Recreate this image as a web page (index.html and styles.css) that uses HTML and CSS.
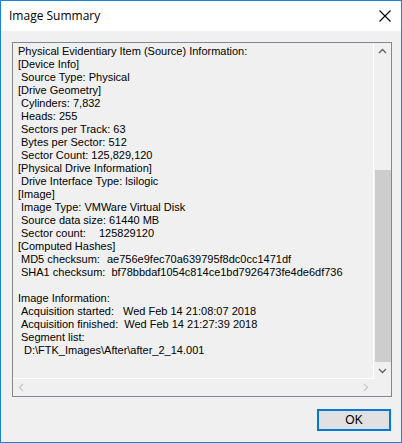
FILE: index.html
```html
<!DOCTYPE html>
<html>
<head>
<meta charset="utf-8">
<link rel="stylesheet" href="styles.css">
</head>
<body>
<div class="window">
  <div class="titlebar">
    <span class="title">Image Summary</span>
    <svg class="close" width="12" height="12" viewBox="0 0 12 12"><path d="M0.5 0.5 L11.5 11.5 M11.5 0.5 L0.5 11.5" stroke="#000" stroke-width="1.1" fill="none"/></svg>
  </div>
  <div class="client">
    <div class="box">
      <div class="content">
        <div class="text">
          <div class="ln">Physical Evidentiary Item (Source) Information:</div>
          <div class="ln">[Device Info]</div>
          <div class="ln in1">Source Type: Physical</div>
          <div class="ln">[Drive Geometry]</div>
          <div class="ln in1">Cylinders: 7,832</div>
          <div class="ln in1">Heads: 255</div>
          <div class="ln in1">Sectors per Track: 63</div>
          <div class="ln in1">Bytes per Sector: 512</div>
          <div class="ln in1">Sector Count: 125,829,120</div>
          <div class="ln">[Physical Drive Information]</div>
          <div class="ln in1">Drive Interface Type: lsilogic</div>
          <div class="ln">[Image]</div>
          <div class="ln in1">Image Type: VMWare Virtual Disk</div>
          <div class="ln in1">Source data size: 61440 MB</div>
          <div class="ln in1 kv"><span class="lbl w81">Sector count:</span><span>125829120</span></div>
          <div class="ln">[Computed Hashes]</div>
          <div class="ln in1 kv"><span class="lbl w89">MD5 checksum:</span><span>ae756e9fec70a639795f8dc0cc1471df</span></div>
          <div class="ln in1 kv"><span class="lbl w91">SHA1 checksum:</span><span>bf78bbdaf1054c814ce1bd7926473fe4de6df736</span></div>
          <div class="ln blank"></div>
          <div class="ln">Image Information:</div>
          <div class="ln in1 kv"><span class="lbl w105">Acquisition started:</span><span>Wed Feb 14 21:08:07 2018</span></div>
          <div class="ln in1 kv"><span class="lbl w103">Acquisition finished:</span><span>Wed Feb 14 21:27:39 2018</span></div>
          <div class="ln in1">Segment list:</div>
          <div class="ln in2">D:\FTK_Images\After\after_2_14.001</div>
        </div>
      </div>
      <div class="vscroll">
        <svg class="arrow" width="17" height="17" viewBox="0 0 17 17"><path d="M5 10 L8.5 6.5 L12 10" stroke="#606060" stroke-width="1.3" fill="none"/></svg>
        <div class="track"><div class="thumb"></div></div>
        <svg class="arrow" width="17" height="17" viewBox="0 0 17 17"><path d="M5 7 L8.5 10.5 L12 7" stroke="#606060" stroke-width="1.3" fill="none"/></svg>
      </div>
      <div class="hscroll">
        <svg class="arrow" width="17" height="17" viewBox="0 0 17 17"><path d="M10 5 L6.5 8.5 L10 12" stroke="#c8c8c8" stroke-width="1.3" fill="none"/></svg>
        <div class="htrack"></div>
        <svg class="arrow" width="17" height="17" viewBox="0 0 17 17"><path d="M7 5 L10.5 8.5 L7 12" stroke="#c8c8c8" stroke-width="1.3" fill="none"/></svg>
      </div>
      <div class="corner"></div>
    </div>
    <div class="buttons">
      <button class="ok">OK</button>
    </div>
  </div>
</div>
</body>
</html>
```
FILE: styles.css
```css
html, body {
  margin: 0;
  padding: 0;
  background: #f0f0f0;
}
.window {
  width: 402px;
  height: 443px;
  box-sizing: border-box;
  border: 1px solid #1883d7;
  display: flex;
  flex-direction: column;
  background: #f0f0f0;
  font-family: "Liberation Sans", Arial, sans-serif;
}
.titlebar {
  height: 30px;
  background: #ffffff;
  display: flex;
  align-items: center;
  justify-content: space-between;
  padding: 0 9px 0 8px;
  flex: none;
}
.title {
  font-size: 12px;
  color: #000;
  font-family: "Open Sans", "Liberation Sans", sans-serif;
  position: relative;
  top: -1px;
}
.close {
  display: block;
  margin-right: 1px;
}
.client {
  flex: 1;
  display: flex;
  flex-direction: column;
  padding: 11px 9px 0 11px;
}
.box {
  width: 380px;
  height: 355px;
  box-sizing: border-box;
  border: 1px solid #828790;
  background: #f0f0f0;
  display: grid;
  grid-template-columns: 1fr 17px;
  grid-template-rows: 1fr 17px;
}
.content {
  overflow: hidden;
  border-right: 1px solid #ffffff;
  border-bottom: 1px solid #ffffff;
}
.text {
  padding: 2px 0 0 5px;
  font-family: "Liberation Sans", Arial, sans-serif;
  font-size: 11px;
  line-height: 13px;
  color: #000;
}
.ln {
  white-space: pre;
  height: 13px;
}
.in1 { padding-left: 3px; }
.in2 { padding-left: 6px; }
.kv {
  display: flex;
}
.lbl {
  flex: none;
  padding-right: 6px;
}
.w81 { min-width: 72px; }
.w89 { min-width: 80px; }
.w91 { min-width: 82px; }
.w103 { min-width: 94px; }
.w105 { min-width: 96px; }
.vscroll {
  display: flex;
  flex-direction: column;
  background: #f0f0f0;
}
.arrow {
  display: block;
  flex: none;
}
.track {
  flex: 1;
  position: relative;
}
.thumb {
  position: absolute;
  left: 1px;
  right: 0;
  top: 110px;
  bottom: 0;
  background: #cdcdcd;
}
.hscroll {
  display: flex;
  background: #f0f0f0;
}
.htrack {
  flex: 1;
}
.corner {
  background: #f0f0f0;
}
.buttons {
  display: flex;
  justify-content: flex-end;
  padding-top: 12px;
}
.ok {
  width: 74px;
  height: 22px;
  box-sizing: border-box;
  border: 2px solid #0078d7;
  background: #e1e1e1;
  font-family: "Liberation Sans", Arial, sans-serif;
  font-size: 12px;
  color: #000;
  padding: 0;
  margin-right: 1px;
}
```
